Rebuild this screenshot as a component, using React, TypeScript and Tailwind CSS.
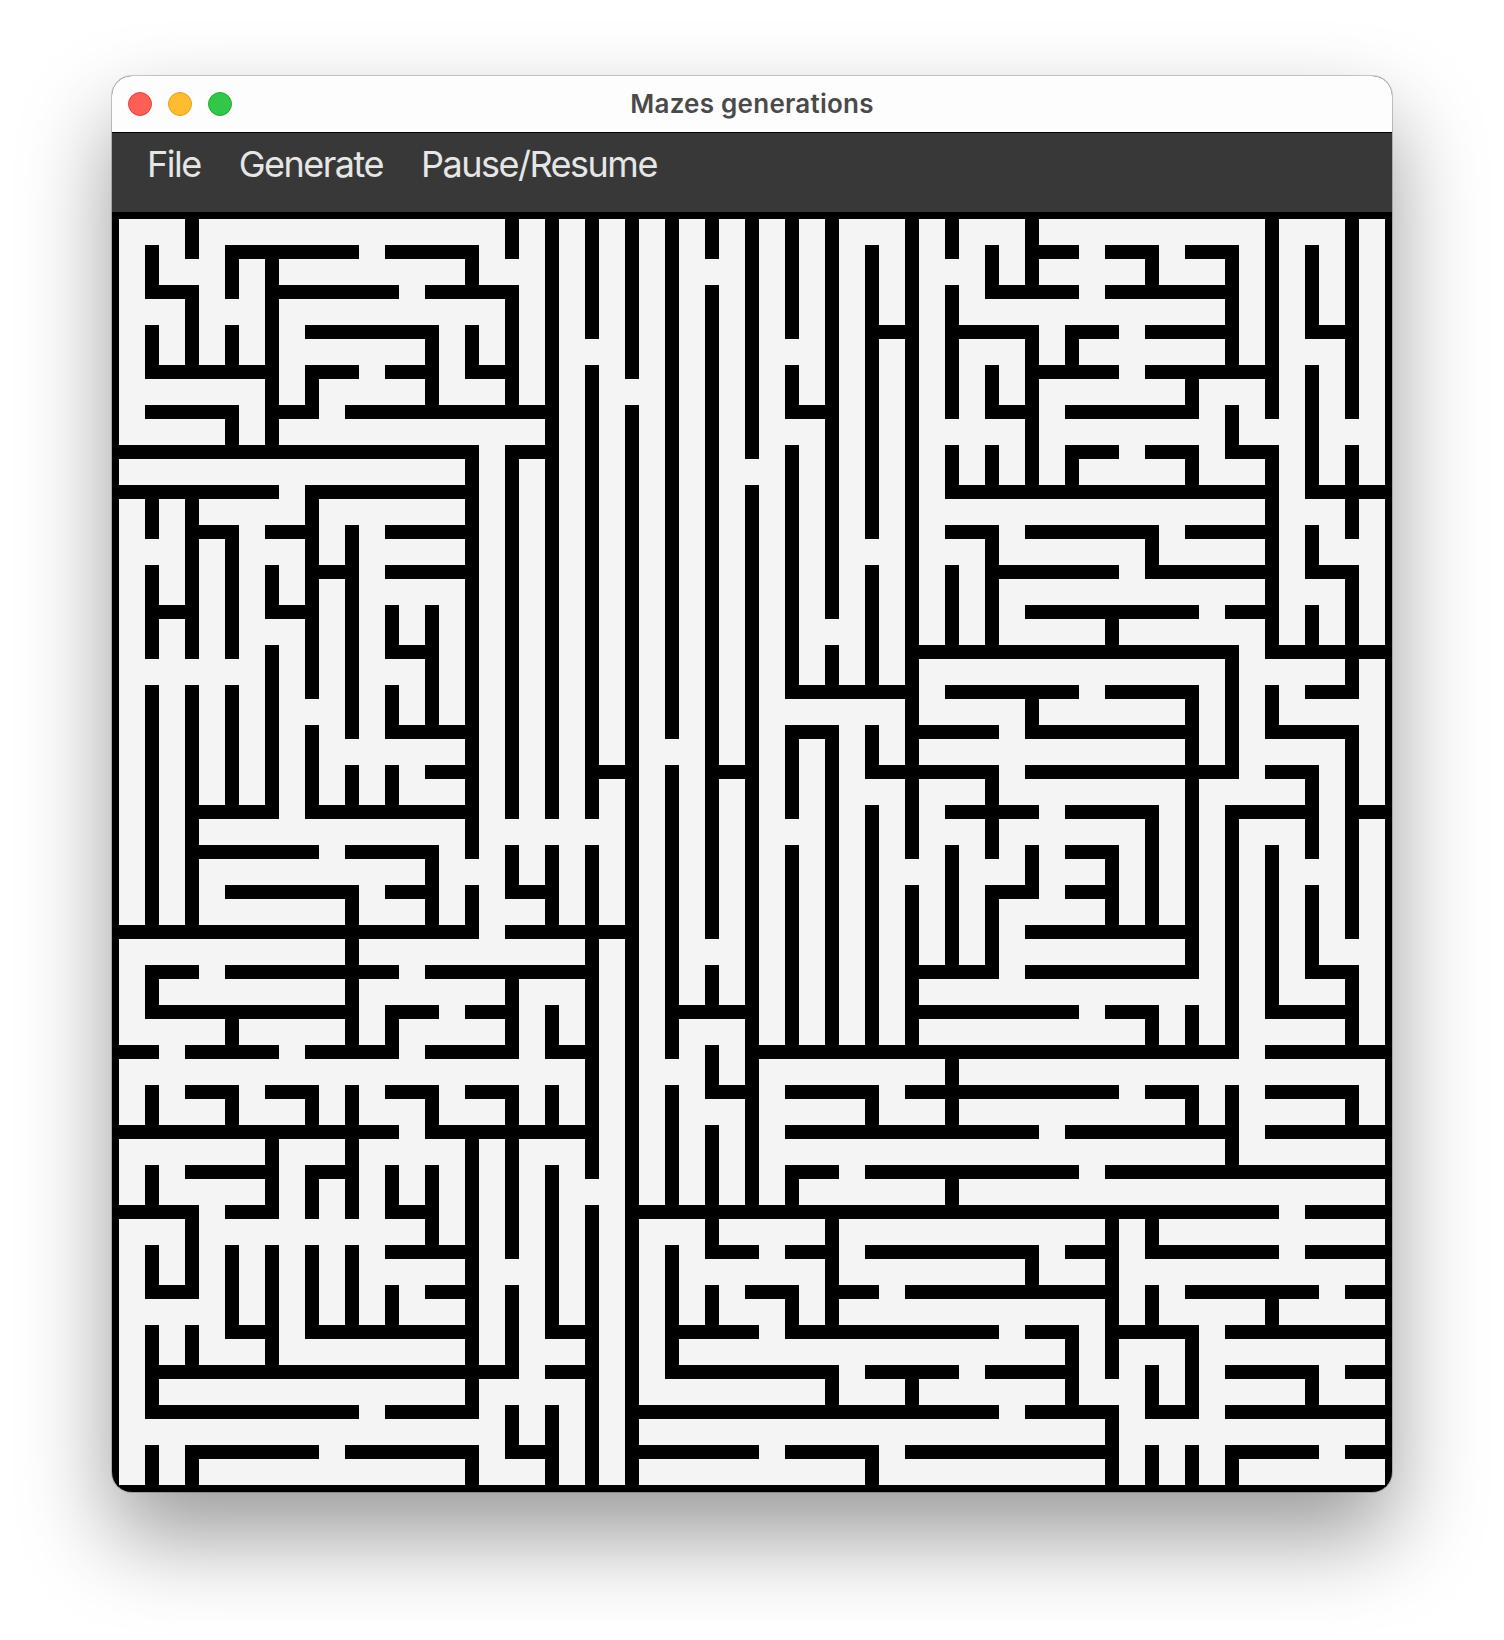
const CELL = 40;
const WALL = 14;

// horizontal walls per grid line: "from-to" in columns
const horizontal: string[] = [
  "0-32",
  "3-6 7-9 23-24 25-26 27-28",
  "1-2 4-7 8-10 22-24 25-28",
  "5-8 19-20 21-23 24-25 26-28 30-31",
  "1-4 5-6 7-8 9-10 23-25 26-29",
  "1-3 4-5 6-11 17-18 22-23 24-27",
  "0-9 10-11 24-25 26-27 28-29",
  "0-4 5-9 21-29 30-32",
  "2-3 4-5 7-9 21-22 23-26 27-29",
  "5-6 7-9 22-25 26-29 30-31",
  "1-2 4-5 23-27 28-29",
  "7-8 20-28 29-32",
  "17-20 21-24 25-27 30-31",
  "7-9 17-18 20-22 23-27 29-31",
  "8-9 12-13 15-16 19-22 23-28 29-30",
  "2-4 5-9 21-23 24-26 28-30 31-32",
  "2-5 6-8 24-25",
  "3-6 7-8 10-11 22-23 24-25",
  "0-9 10-13 23-27",
  "1-2 3-7 8-12 20-22 23-27 30-31",
  "1-6 7-8 9-10 14-16 20-24 25-26 29-31",
  "0-1 2-4 5-7 8-10 11-12 16-28 29-32",
  "2-3 4-5 7-8 9-10 15-16 17-19 20-25 26-27 29-31",
  "0-7 8-12 17-23 24-28 29-32",
  "2-4 5-6 17-18 19-24 25-32",
  "0-2 3-4 7-8 13-29 30-32",
  "7-9 15-16 17-18 19-23 24-25 26-29 30-32",
  "1-2 8-9 16-17 18-19 20-25 27-30 31-32",
  "3-4 5-9 11-12 14-16 17-22 23-24 25-27 28-32",
  "1-10 11-12 14-18 19-21 22-24 28-30 31-32",
  "1-6 7-9 13-22 23-25 26-27 28-32",
  "2-5 6-9 10-11 13-16 17-19 20-25 28-30 31-32",
  "0-32",
];

// vertical walls per grid line: "from-to" in rows
const vertical: string[] = [
  "0-32",
  "1-2 3-4 7-8 9-11 12-18 19-20 22-23 24-25 26-27 28-30 31-32",
  "0-1 2-4 7-11 12-18 25-27 28-29 31-32",
  "1-2 3-4 5-6 8-11 12-15 20-21 22-23 26-28",
  "1-6 9-10 11-15 23-25 26-29",
  "4-5 7-12 13-15 22-23 24-25 26-28",
  "8-13 14-15 17-21 22-25 26-28",
  "10-11 12-13 14-15 20-21 24-25 27-28",
  "3-5 10-13 16-18 22-23 24-26",
  "1-2 3-4 6-16 17-18 23-30 31-32",
  "0-1 2-5 6-15 16-17 19-21 22-26 27-29 30-31",
  "0-15 16-18 20-21 22-23 24-28 30-32",
  "0-3 4-15 16-24 25-32",
  "0-4 5-32",
  "0-13 14-21 22-25 26-29",
  "0-1 2-18 19-20 21-22 23-26 27-28",
  "0-6 7-25",
  "0-3 4-5 6-12 13-15 16-21 24-25 27-28",
  "0-10 11-12 13-21 25-28 29-30",
  "1-8 9-12 13-14 15-21 22-23 31-32",
  "0-16 17-21 29-30",
  "0-1 2-5 6-7 9-11 16-19 21-23 24-25",
  "1-2 4-5 6-7 8-11 14-16 17-19",
  "0-2 3-7 12-13 16-17 26-27",
  "3-4 6-7 28-30",
  "10-11 16-18 25-29 30-32",
  "1-2 8-9 15-18 20-21 25-26 27-28 29-30 31-32",
  "4-5 6-7 12-19 20-21 22-23 28-30 31-32",
  "1-4 5-6 11-14 15-21 22-24 31-32",
  "0-5 6-11 12-13 16-20 27-28",
  "1-3 4-7 8-9 10-11 14-16 17-19 29-30",
  "0-5 6-8 9-12 13-18 19-21 22-23",
  "0-32",
];

function spans(line: string) {
  return line.split(" ").map((s) => s.split("-").map(Number));
}

function Maze() {
  return (
    <svg width={1280} height={1280} viewBox="0 0 1280 1280" className="block">
      <rect width={1280} height={1280} fill="#f4f4f4" />
      {horizontal.map((line, j) =>
        spans(line).map(([a, b]) => (
          <rect
            key={`h${j}-${a}`}
            x={a * CELL - WALL / 2}
            y={j * CELL - WALL / 2}
            width={(b - a) * CELL + WALL}
            height={WALL}
            fill="#000"
          />
        ))
      )}
      {vertical.map((line, k) =>
        spans(line).map(([a, b]) => (
          <rect
            key={`v${k}-${a}`}
            x={k * CELL - WALL / 2}
            y={a * CELL - WALL / 2}
            width={WALL}
            height={(b - a) * CELL + WALL}
            fill="#000"
          />
        ))
      )}
    </svg>
  );
}

export default function App() {
  return (
    <div className="w-[1504px] h-[1640px] bg-white pt-[76px] pl-[112px] overflow-hidden">
      <div className="w-[1280px] rounded-[20px] overflow-hidden bg-black shadow-[0_0_0_1px_rgba(0,0,0,0.2),0_44px_90px_rgba(0,0,0,0.4)]">
        {/* title bar */}
        <div className="relative flex items-center justify-center h-[57px] pb-[2px] bg-[#fdfdfd] border-b border-black">
          <div className="absolute left-4 top-4 flex gap-4">
            <span className="w-6 h-6 rounded-full bg-[#ff5f57] border border-[#e0443e]" />
            <span className="w-6 h-6 rounded-full bg-[#febc2e] border border-[#dea123]" />
            <span className="w-6 h-6 rounded-full bg-[#32c748] border border-[#27aa35]" />
          </div>
          <span className="font-['Inter',sans-serif] text-[26px] font-semibold tracking-[0.25px] text-[#4a4a4a]">
            Mazes generations
          </span>
        </div>
        {/* menu */}
        <div className="flex items-start gap-[38px] h-[79px] pl-[35px] pt-[4px] bg-[#383838] font-['Inter',sans-serif] text-[36px] font-normal tracking-[-1.5px] text-[#e6e6e6]">
          <span>File</span>
          <span>Generate</span>
          <span>Pause/Resume</span>
        </div>
        <Maze />
      </div>
    </div>
  );
}
